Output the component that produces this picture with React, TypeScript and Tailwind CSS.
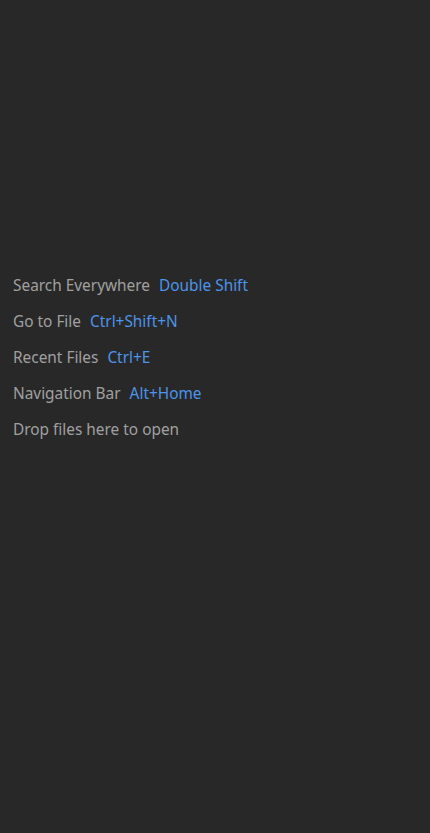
const items = [
  { label: "Search Everywhere", key: "Double Shift" },
  { label: "Go to File", key: "Ctrl+Shift+N" },
  { label: "Recent Files", key: "Ctrl+E" },
  { label: "Navigation Bar", key: "Alt+Home" },
  { label: "Drop files here to open", key: "" },
];

export default function App() {
  return (
    <div className="h-[833px] w-[430px] bg-[#282828] pt-[274px] pl-[13px] font-['Noto_Sans',sans-serif] text-[15.4px]">
      <div className="flex flex-col gap-[12px]">
        {items.map((it) => (
          <div key={it.label} className="flex h-[24px] items-center gap-[9px] leading-none">
            <span className="text-[#a0a0a0]">{it.label}</span>
            {it.key && <span className="text-[#4d94ea]">{it.key}</span>}
          </div>
        ))}
      </div>
    </div>
  );
}
